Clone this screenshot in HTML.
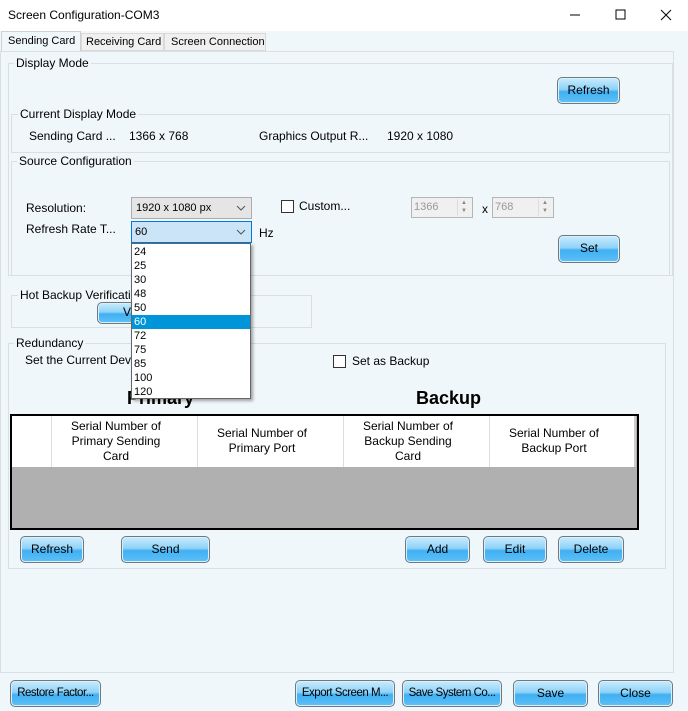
<!DOCTYPE html>
<html><head><meta charset="utf-8"><style>
*{margin:0;padding:0;box-sizing:border-box}
html,body{width:688px;height:711px;overflow:hidden}
body{position:relative;background:#f0f7fb;font-family:"Liberation Sans",sans-serif;font-size:12px;color:#000}
.a{position:absolute;white-space:nowrap}
.g{position:absolute;border:1px solid #d9dfe3}
.lg{position:absolute;background:#f0f7fb;padding:0 2px;line-height:13px}
.btn{position:absolute;border:1px solid #6f7a80;border-radius:5px;background:linear-gradient(#c9ecfd 0%,#8fd2f8 45%,#3fb0f3 55%,#5fc0f6 100%);text-align:center;font-size:12px;box-shadow:inset 0 0 0 1px #d8f0fc;white-space:nowrap;overflow:hidden}
.sm{font-size:11.5px;letter-spacing:-0.5px}
.cb{position:absolute;width:13px;height:13px;border:1px solid #333;background:#fff}
.dd div{height:14px;line-height:14px;padding-left:2px}
.th{position:absolute;text-align:center;white-space:normal;line-height:15px}
</style></head><body>
<div class="a" style="left:0;top:0;width:688px;height:31px;background:#fff"></div>
<div class="a" style="left:8px;top:8px;font-size:12px">Screen Configuration-COM3</div>
<svg class="a" style="left:565px;top:6px" width="115" height="18"><path d="M5 9h10" stroke="#000"/><rect x="51" y="4" width="9" height="9" fill="none" stroke="#000"/><path d="M96 4l10 10M106 4l-10 10" stroke="#000"/></svg>
<div class="a" style="left:0;top:31px;width:688px;height:20px;background:#f0f7fb"></div>
<div class="a" style="left:1px;top:31px;width:80px;height:21px;background:#f0f7fb;border:1px solid #d0d0d0;border-bottom:none;padding:3px 0 0 6px;font-size:11px">Sending Card</div>
<div class="a" style="left:81px;top:33px;width:83px;height:18px;background:#f0f0f0;border:1px solid #d9d9d9;padding:2px 0 0 4px;font-size:11px">Receiving Card</div>
<div class="a" style="left:164px;top:33px;width:102px;height:18px;background:#f0f0f0;border:1px solid #d9d9d9;padding:2px 0 0 6px;font-size:11px">Screen Connection</div>
<div class="a" style="left:0;top:51px;width:674px;height:622px;border:1px solid #d9dfe3"></div>

<div class="g" style="left:8px;top:63px;width:665px;height:213px"></div>
<div class="lg" style="left:14px;top:57px">Display Mode</div>
<div class="btn" style="left:557px;top:77px;width:63px;height:27px;line-height:24px">Refresh</div>

<div class="g" style="left:11px;top:114px;width:659px;height:39px"></div>
<div class="lg" style="left:18px;top:108px">Current Display Mode</div>
<div class="a" style="left:29px;top:129px">Sending Card ...</div>
<div class="a" style="left:129px;top:129px">1366 x 768</div>
<div class="a" style="left:259px;top:129px">Graphics Output R...</div>
<div class="a" style="left:387px;top:129px">1920 x 1080</div>

<div class="g" style="left:11px;top:161px;width:659px;height:115px"></div>
<div class="lg" style="left:17px;top:155px">Source Configuration</div>
<div class="a" style="left:26px;top:201px">Resolution:</div>
<div class="a" style="left:131px;top:197px;width:121px;height:22px;background:#e5e5e5;border:1px solid #adadad;padding:4px 0 0 4px;font-size:11px">1920 x 1080 px</div>
<svg class="a" style="left:236px;top:204px" width="10" height="8"><path d="M1 2l4 4 4-4" fill="none" stroke="#555"/></svg>
<div class="cb" style="left:281px;top:200px"></div>
<div class="a" style="left:299px;top:199px">Custom...</div>
<div class="a" style="left:411px;top:197px;width:62px;height:21px;background:#f0f0f0;border:1px solid #b5b5b5;padding:3px 0 0 2px;font-size:11px;color:#999">1366</div>
<div class="a" style="left:457px;top:199px;width:13px;height:17px;border-left:1px solid #ddd;font-size:6px;color:#888;text-align:center;line-height:8px">▲<br>▼</div>
<div class="a" style="left:482px;top:202px">x</div>
<div class="a" style="left:492px;top:197px;width:62px;height:21px;background:#f0f0f0;border:1px solid #b5b5b5;padding:3px 0 0 2px;font-size:11px;color:#999">768</div>
<div class="a" style="left:538px;top:199px;width:13px;height:17px;border-left:1px solid #ddd;font-size:6px;color:#888;text-align:center;line-height:8px">▲<br>▼</div>
<div class="a" style="left:26px;top:222px">Refresh Rate T...</div>
<div class="a" style="left:131px;top:221px;width:121px;height:22px;background:#cce4f7;border:1px solid #0078d7;padding:4px 0 0 3px;font-size:11px">60</div>
<svg class="a" style="left:236px;top:228px" width="10" height="8"><path d="M1 2l4 4 4-4" fill="none" stroke="#555"/></svg>
<div class="a" style="left:259px;top:226px">Hz</div>
<div class="btn" style="left:558px;top:235px;width:62px;height:28px;line-height:25px">Set</div>

<div class="g" style="left:11px;top:295px;width:301px;height:33px"></div>
<div class="lg" style="left:18px;top:289px">Hot Backup Verification</div>
<div class="btn" style="left:97px;top:302px;width:60px;height:22px;line-height:19px">V</div>

<div class="g" style="left:8px;top:343px;width:658px;height:226px"></div>
<div class="lg" style="left:14px;top:337px">Redundancy</div>
<div class="a" style="left:25px;top:353px">Set the Current Device as Primary</div>
<div class="cb" style="left:333px;top:355px"></div>
<div class="a" style="left:352px;top:354px">Set as Backup</div>
<div class="a" style="left:127px;top:388px;font-size:18px;font-weight:bold">Primary</div>
<div class="a" style="left:416px;top:388px;font-size:18px;font-weight:bold">Backup</div>
<div class="a" style="left:10px;top:414px;width:629px;height:116px;border:2px solid #000;background:#b0b0b0"></div>
<div class="a" style="left:12px;top:416px;width:624px;height:51px;background:#fff;border-right:2px solid #ccc"></div>
<div class="a" style="left:51px;top:416px;height:51px;border-left:1px solid #ddd"></div>
<div class="a" style="left:197px;top:416px;height:51px;border-left:1px solid #ddd"></div>
<div class="a" style="left:343px;top:416px;height:51px;border-left:1px solid #ddd"></div>
<div class="a" style="left:489px;top:416px;height:51px;border-left:1px solid #ddd"></div>
<div class="th" style="left:64px;top:419px;width:104px">Serial Number of Primary Sending Card</div>
<div class="th" style="left:210px;top:426px;width:104px">Serial Number of Primary Port</div>
<div class="th" style="left:356px;top:419px;width:104px">Serial Number of Backup Sending Card</div>
<div class="th" style="left:502px;top:426px;width:104px">Serial Number of Backup Port</div>

<div class="btn" style="left:20px;top:536px;width:64px;height:27px;line-height:24px">Refresh</div>
<div class="btn" style="left:121px;top:536px;width:89px;height:27px;line-height:24px">Send</div>
<div class="btn" style="left:405px;top:536px;width:65px;height:27px;line-height:24px">Add</div>
<div class="btn" style="left:483px;top:536px;width:64px;height:27px;line-height:24px">Edit</div>
<div class="btn" style="left:558px;top:536px;width:66px;height:27px;line-height:24px">Delete</div>

<div class="btn sm" style="left:10px;top:680px;width:91px;height:27px;line-height:24px">Restore Factor...</div>
<div class="btn sm" style="left:295px;top:680px;width:100px;height:27px;line-height:24px">Export Screen M...</div>
<div class="btn sm" style="left:402px;top:680px;width:100px;height:27px;line-height:24px">Save System Co...</div>
<div class="btn" style="left:513px;top:680px;width:75px;height:27px;line-height:24px">Save</div>
<div class="btn" style="left:598px;top:680px;width:75px;height:27px;line-height:24px">Close</div>

<div class="a dd" style="left:131px;top:243px;width:120px;height:156px;background:#fff;border:1px solid #666;box-shadow:2px 2px 3px rgba(0,0,0,.35);font-size:11px;padding-top:1px">
<div>24</div><div>25</div><div>30</div><div>48</div><div>50</div><div style="background:#0095d9;color:#fff">60</div><div>72</div><div>75</div><div>85</div><div>100</div><div>120</div>
</div>
</body></html>
